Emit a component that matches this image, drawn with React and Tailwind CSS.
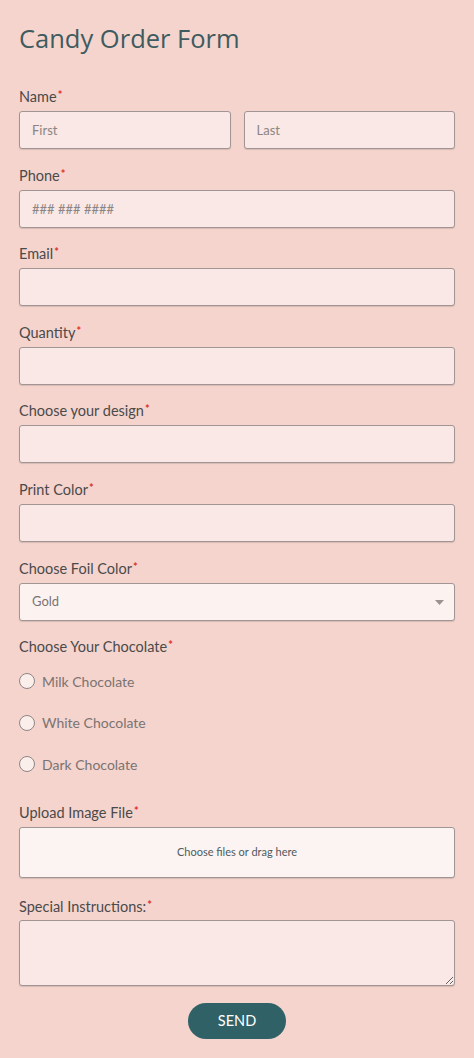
import React from 'react';

const Star = () => <span className="relative -top-[3px] ml-[1px] text-[11px] font-bold text-[#e0302a]">*</span>;

const Label = ({ children }) => (
  <div className="h-5 mb-1 text-[14.5px] leading-5 text-[#4a4a4a]">
    {children}
    <Star />
  </div>
);

const Input = ({ placeholder, className = '' }) => (
  <input
    type="text"
    placeholder={placeholder}
    className={`h-[38px] w-full rounded-[3px] border border-[#a09593] bg-[#f9e8e5] px-3 text-[13px] text-[#4a4a4a] placeholder-[#8c8584] outline-none shadow-[0_1px_1px_rgba(0,0,0,0.12)] ${className}`}
  />
);

const Field = ({ label, placeholder }) => (
  <div className="mb-[16.6px]">
    <Label>{label}</Label>
    <Input placeholder={placeholder} />
  </div>
);

const Radio = ({ text }) => (
  <label className="flex h-[41.5px] items-center">
    <span className="h-4 w-4 rounded-full border border-[#8f8584] bg-[#fbefec]"></span>
    <span className="ml-[7px] text-[14px] text-[#7a7372]">{text}</span>
  </label>
);

const App = () => {
  return (
    <div
      className="min-h-[1058px] bg-[#f5d4cd] px-[19px] pt-[20px] pb-5"
      style={{ fontFamily: 'Lato, "Noto Sans", sans-serif' }}
    >
      <h1
        className="mb-[31px] text-[25.5px] leading-9 text-[#3e5b60]"
        style={{ fontFamily: '"Open Sans", sans-serif' }}
      >
        Candy Order Form
      </h1>

      <div className="mb-[16.6px]">
        <Label>Name</Label>
        <div className="flex gap-[13px]">
          <Input placeholder="First" />
          <Input placeholder="Last" />
        </div>
      </div>

      <Field label="Phone" placeholder="### ### ####" />
      <Field label="Email" />
      <Field label="Quantity" />
      <Field label="Choose your design" />
      <Field label="Print Color" />

      <div className="mb-[16px]">
        <Label>Choose Foil Color</Label>
        <div className="relative flex h-[38px] w-full items-center rounded-[3px] border border-[#a09593] bg-[#fcf3f1] px-3 text-[13px] text-[#7a7372] shadow-[0_1px_1px_rgba(0,0,0,0.12)]">
          Gold
          <svg className="absolute right-[10px] top-[16px]" width="9" height="5" viewBox="0 0 9 5">
            <path d="M0 0 L9 0 L4.5 5 Z" fill="#9a9392" />
          </svg>
        </div>
      </div>

      <div className="mb-[18px]">
        <Label>Choose Your Chocolate</Label>
        <div className="mt-[3px]">
          <Radio text="Milk Chocolate" />
          <Radio text="White Chocolate" />
          <Radio text="Dark Chocolate" />
        </div>
      </div>

      <div className="mb-[19px]">
        <Label>Upload Image File</Label>
        <div className="flex h-[51px] w-full items-center justify-center rounded-[3px] border border-[#a09593] bg-[#fcf4f2] text-[11px] text-[#4e5a5c] shadow-[0_1px_1px_rgba(0,0,0,0.12)]">
          Choose files or drag here
        </div>
      </div>

      <div className="mb-[17px]">
        <div className="h-5 mb-[3px] text-[14.5px] leading-5 text-[#4a4a4a]">
          Special Instructions:<Star />
        </div>
        <textarea className="block h-[66px] w-full rounded-[3px] border border-[#a09593] bg-[#f9e8e5] shadow-[0_1px_1px_rgba(0,0,0,0.12)] outline-none"></textarea>
      </div>

      <div className="flex justify-center">
        <button className="h-[36px] w-[98px] rounded-full bg-[#2f6167] text-[14.5px] text-white">
          SEND
        </button>
      </div>
    </div>
  );
};

export default App;
